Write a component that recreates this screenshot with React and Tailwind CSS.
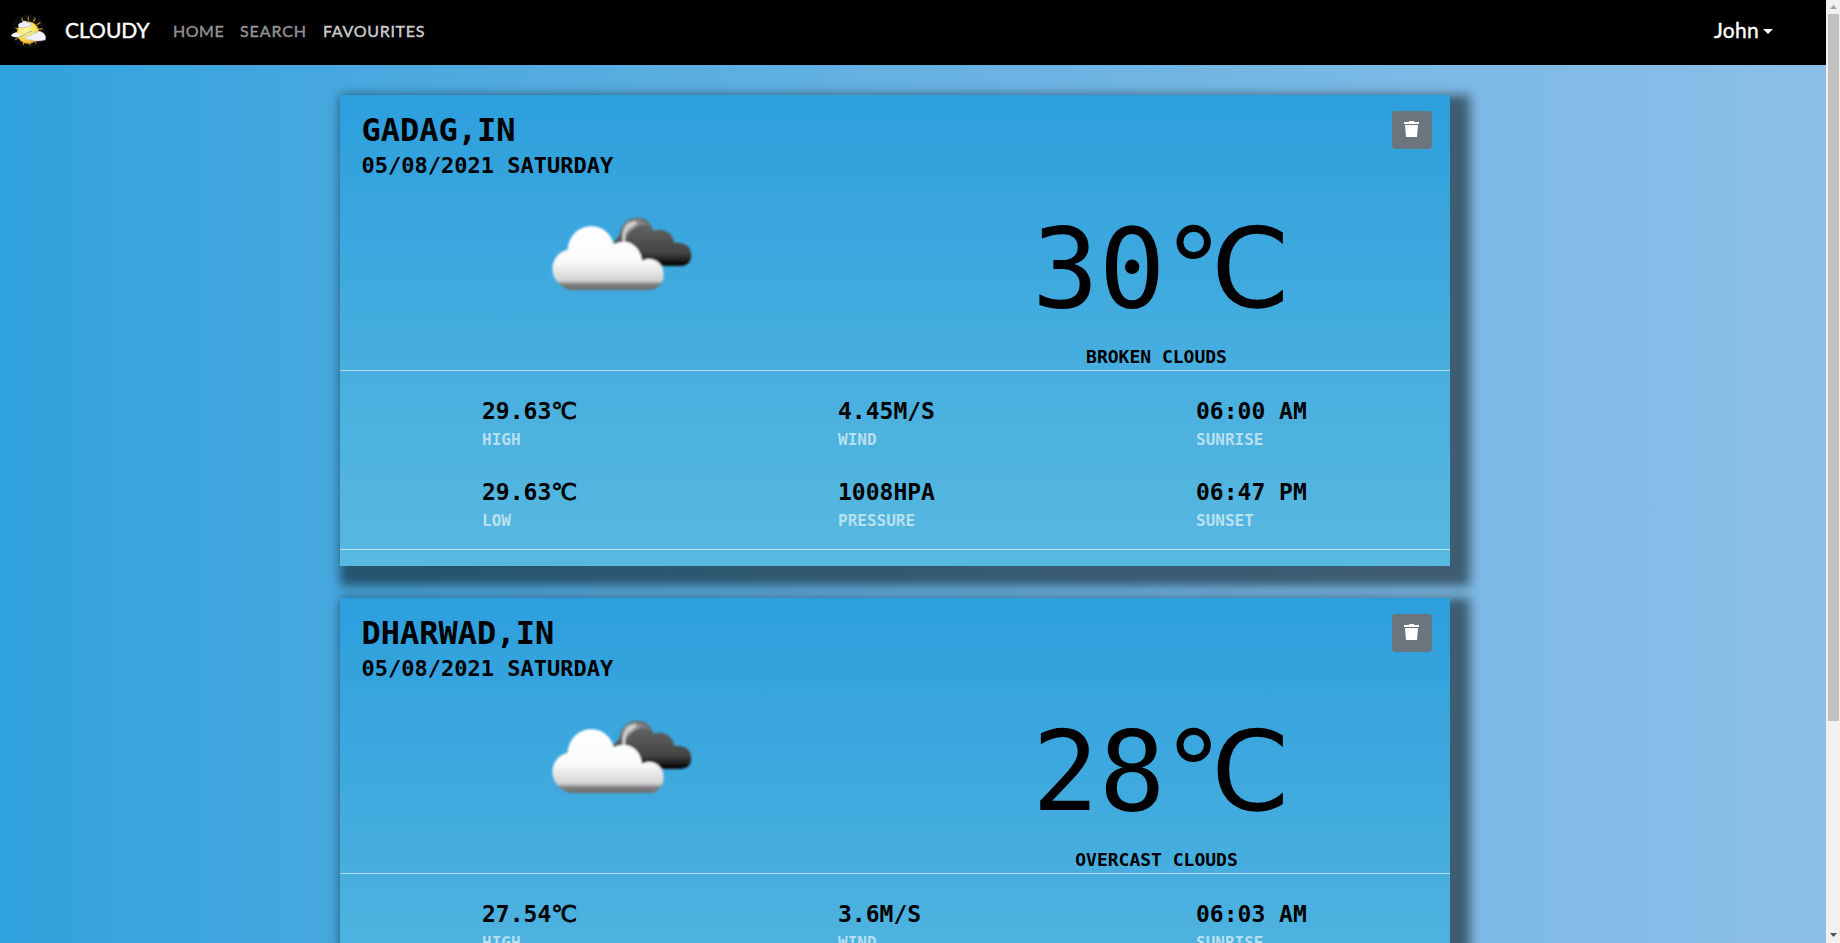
const CARDS = [
  {
    city: 'GADAG,IN', date: '05/08/2021 SATURDAY', temp: '30', desc: 'BROKEN CLOUDS',
    stats: [['29.63', 'HIGH', '℃'], ['4.45M/S', 'WIND'], ['06:00 AM', 'SUNRISE'], ['29.63', 'LOW', '℃'], ['1008HPA', 'PRESSURE'], ['06:47 PM', 'SUNSET']],
  },
  {
    city: 'DHARWAD,IN', date: '05/08/2021 SATURDAY', temp: '28', desc: 'OVERCAST CLOUDS',
    stats: [['27.54', 'HIGH', '℃'], ['3.6M/S', 'WIND'], ['06:03 AM', 'SUNRISE']],
  },
];

function Logo() {
  return (
    <svg className="h-9 w-9" viewBox="30 37 112 108">
      <defs>
        <radialGradient id="sun" cx="0.4" cy="0.35" r="0.7">
          <stop offset="0" stopColor="#fff7a8" />
          <stop offset="0.6" stopColor="#f8e060" />
          <stop offset="1" stopColor="#eda02a" />
        </radialGradient>
      </defs>
      <circle cx="87" cy="92" r="53" fill="#0c0c0c" />
      <path d="M87 46v12M66 50l5 12M108 50l-5 12M125 64l-12 8M131 84l-14 2M56 112l-10 6M74 122l-3 12M92 124v11M108 120l3 10M47 82l10 3" stroke="#a58d18" strokeWidth="4" />
      <circle cx="86" cy="96" r="34" fill="url(#sun)" stroke="#d99a1c" strokeWidth="2" />
      <path d="M57 78c-4-8 3-13 9-12 3-8 15-8 18-1 7-2 13 2 12 7-1 6-8 6-13 5-6 5-18 5-26 1z" fill="#eef1f7" stroke="#8fa3b5" strokeWidth="1.5" />
      <path d="M33 106c1-6 7-6 10-9 6-4 12-1 14 3 6 0 8 5 7 9-9 3-22 2-31-3z" fill="#f3f4fa" />
      <path d="M80 112c2-6 9-7 13-6 4-7 13-9 18-8 4-6 13-8 18-3 6 1 8 7 9 8 5 8 3 14 1 16-15 4-32 5-45-1-6 2-12 0-14-6z" fill="#f2f3fa" stroke="#a7b5b2" strokeWidth="1.5" />
      <path d="M58 107c7 2 15-1 21-6s12-8 20-9" fill="none" stroke="#9cb7a0" strokeWidth="3" />
    </svg>
  );
}

function Clouds({ id }) {
  return (
    <svg className="h-[77px] w-[145px]" viewBox="690 405 435 231">
      <defs>
        <linearGradient id={id + 'd'} gradientUnits="userSpaceOnUse" x1="0" y1="425" x2="0" y2="556">
          <stop offset="0" stopColor="#666" />
          <stop offset="0.7" stopColor="#444" />
          <stop offset="0.92" stopColor="#111" />
          <stop offset="1" stopColor="#111" />
        </linearGradient>
        <linearGradient id={id + 'w'} gradientUnits="userSpaceOnUse" x1="0" y1="435" x2="0" y2="630">
          <stop offset="0" stopColor="#fff" />
          <stop offset="0.55" stopColor="#fafafa" />
          <stop offset="0.84" stopColor="#d4d4d4" />
          <stop offset="0.91" stopColor="#7c7c7c" />
          <stop offset="1" stopColor="#6d6d6d" />
        </linearGradient>
        <linearGradient id={id + 'r'} x1="0" y1="1" x2="1" y2="0">
          <stop offset="0" stopColor="#555" />
          <stop offset="0.5" stopColor="#b5b5b5" />
          <stop offset="1" stopColor="#555" />
        </linearGradient>
        <filter id={id + 'b'} x="-5%" y="-5%" width="110%" height="110%">
          <feGaussianBlur stdDeviation="3" />
        </filter>
      </defs>
      <g filter={`url(#${id}b)`} transform="translate(0 -1)">
        <path d="M877 490C885 478 897 472 899 458C906 424 930 411 953 411C978 411 993 427 1000 450C1030 440 1058 455 1063 487C1090 483 1113 496 1114 522C1114 543 1101 556 1083 556H930Z" fill={`url(#${id}d)`} />
        <path d="M900 478C900 436 925 415 953 415C973 415 986 425 991 438C973 430 950 430 935 446C924 456 920 466 919 480Z" fill={`url(#${id}r)`} />
        <path d="M912 484C908 455 920 432 948 426" fill="none" stroke="#ddd" strokeWidth="7" />
        <path d="M750 628C717 620 697 590 697 565C698 536 716 513 743 507C746 466 776 437 813 437C848 437 873 458 881 491C925 468 962 499 966 540C1000 524 1031 549 1031 580C1031 606 1016 623 995 628Z" fill={`url(#${id}w)`} />
      </g>
    </svg>
  );
}

function Card({ card, id }) {
  return (
    <section className="flex h-[471px] w-[1110px] shrink-0 flex-col bg-gradient-to-b from-[#2c9fdd] to-[#58b9e0] font-bold text-black shadow-[10px_10px_10px_10px_rgba(0,0,0,0.5)]">
      <div className="flex h-[85px] shrink-0 items-start justify-between pl-[21.5px] pr-[18px] pt-4">
        <div>
          <h2 className="h-[39px] text-[32px] leading-[38px]">{card.city}</h2>
          <p className="h-8 text-[22px] leading-8">{card.date}</p>
        </div>
        <button className="flex h-[38px] w-10 items-center justify-center rounded bg-[#6c757d] pb-[3px] pr-px">
          <svg className="h-4 w-[15px]" viewBox="0 0 15 16" fill="#fff">
            <path d="M5 0h5v1h5v2H0V1h5zM1 4h13l-1 12H2z" />
          </svg>
        </button>
      </div>
      <div className="flex h-[190px] shrink-0 pl-[210px]">
        <div className="w-[485px] pt-9"><Clouds id={id} /></div>
        <div className="flex w-[260px] flex-col items-start pt-[7px]">
          <div className="ml-[-3px] h-[158px] whitespace-nowrap text-[111px] font-normal leading-[163px]">{card.temp}℃</div>
          <div className="-ml-[17px] h-6 self-center whitespace-nowrap text-[18px] leading-6">{card.desc}</div>
        </div>
      </div>
      <div className="grid h-[180px] shrink-0 grid-cols-[356px_358px_200px] grid-rows-[81px_81px] border-y border-white/60 pl-[142px] pt-[25px]">
        {card.stats.map(([value, label, unit]) => (
          <div key={label}>
            <div className="h-8 text-[23px] leading-[30px]">
              {value}
              {unit && <span className="font-['DejaVu_Sans',sans-serif] font-normal [-webkit-text-stroke:0.8px]">{unit}</span>}
            </div>
            <div className="h-6 text-[16px] leading-6 text-white/60">{label}</div>
          </div>
        ))}
      </div>
    </section>
  );
}

export default function App() {
  return (
    <div className="flex h-[943px] w-[1840px] overflow-hidden">
      <div className="flex w-[1826px] flex-col overflow-hidden bg-gradient-to-r from-[#2fa2dd] via-[#66b1e2] to-[#8bbfe8]">
        <nav className="flex h-[65px] shrink-0 items-center bg-black pb-[3px] pl-[10px] pr-[53px] font-['Lato','Noto_Sans',sans-serif] text-white [-webkit-text-stroke:0.4px]">
          <Logo />
          <span className="-mt-[2px] ml-[19px] w-[108px] text-[21px] leading-6">CLOUDY</span>
          <span className="w-[67px] text-[16px] tracking-[0.5px] text-white/50">HOME</span>
          <span className="w-[83px] text-[16px] tracking-[0.9px] text-white/50">SEARCH</span>
          <span className="text-[16px] tracking-[0.7px] text-white/75">FAVOURITES</span>
          <span className="-mt-[2px] ml-auto flex items-center gap-1 text-[21px] tracking-[0.3px]">
            John
            <svg className="mt-[3px] h-[5px] w-[10px]" viewBox="0 0 10 5" fill="#fff"><path d="M0 0h10L5 5z" /></svg>
          </span>
        </nav>
        <main className="flex flex-col gap-8 pl-[340px] pt-[30px] font-['DejaVu_Sans_Mono','DejaVu_Sans',monospace]">
          {CARDS.map((c, i) => <Card key={c.city} card={c} id={'c' + i} />)}
        </main>
      </div>
      <div className="flex w-[14px] flex-col items-center justify-between bg-[#f1f1f1]">
        <div className="flex h-[721px] flex-col items-center">
          <svg className="mt-[5px] h-1 w-[7px] shrink-0" viewBox="0 0 7 4" fill="#a3a3a3"><path d="M0 4h7L3.5 0z" /></svg>
          <div className="mt-[5px] w-[11px] flex-1 bg-[#c1c1c1]" />
        </div>
        <svg className="mb-[6px] h-1 w-[7px]" viewBox="0 0 7 4" fill="#505050"><path d="M0 0h7L3.5 4z" /></svg>
      </div>
    </div>
  );
}
